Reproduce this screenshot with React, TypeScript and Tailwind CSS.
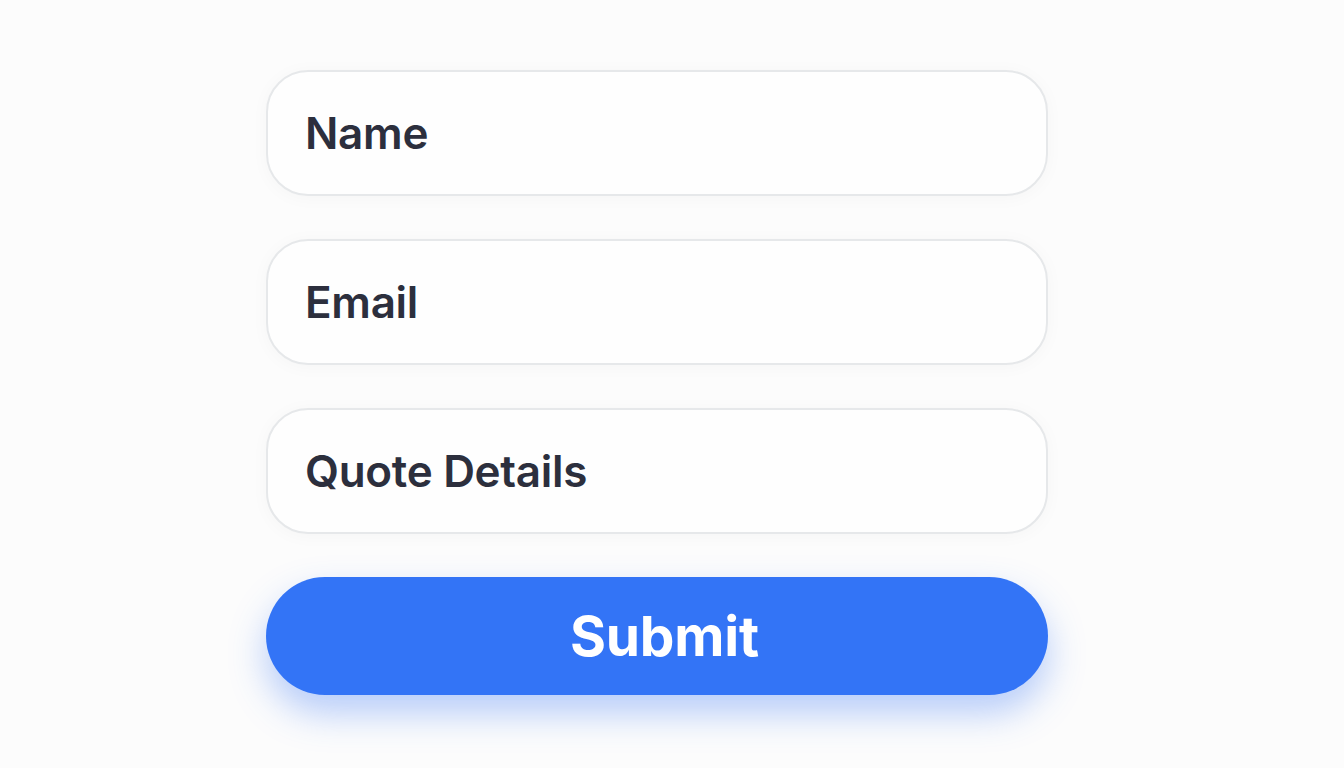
export default function App() {
  const fields = ["Name", "Email", "Quote Details"];
  return (
    <div
      className="w-[1344px] h-[768px] bg-[#fcfcfc] overflow-hidden"
      style={{ fontFamily: "Inter, 'Noto Sans', sans-serif" }}
    >
      <form className="ml-[266px] pt-[70px] w-[782px] flex flex-col gap-[43px]">
        {fields.map((f) => (
          <div
            key={f}
            className="h-[126px] rounded-[42px] border-2 border-[#e6e8ea] bg-[#fefefe] shadow-[0_2px_18px_rgba(0,0,0,0.03)] flex items-center pl-[37px]"
          >
            <span className="text-[44px] font-semibold text-[#2c2f3d] tracking-[-0.3px]">{f}</span>
          </div>
        ))}
        <button
          type="button"
          className="h-[118px] rounded-full bg-[#3374f6] shadow-[0_18px_36px_rgba(51,116,246,0.35)] flex items-center justify-center pl-[15px]"
        >
          <span className="text-[55px] font-bold text-white tracking-[-0.2px]">Submit</span>
        </button>
      </form>
    </div>
  );
}
